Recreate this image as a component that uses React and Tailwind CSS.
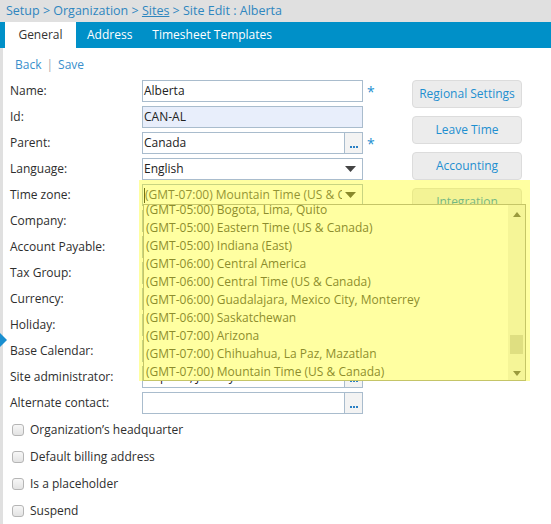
import React from 'react';

const ZONES = [
  '(GMT-05:00) Bogota, Lima, Quito',
  '(GMT-05:00) Eastern Time (US & Canada)',
  '(GMT-05:00) Indiana (East)',
  '(GMT-06:00) Central America',
  '(GMT-06:00) Central Time (US & Canada)',
  '(GMT-06:00) Guadalajara, Mexico City, Monterrey',
  '(GMT-06:00) Saskatchewan',
  '(GMT-07:00) Arizona',
  '(GMT-07:00) Chihuahua, La Paz, Mazatlan',
  '(GMT-07:00) Mountain Time (US & Canada)',
];

function Star() {
  return <span className="ml-[4px] text-[#1e8fd0] text-[14px] leading-none mt-[2px]">*</span>;
}

function TextBox({ value = '', tint = false }) {
  return (
    <div className={`w-[221px] h-[22px] border border-[#a9bccd] px-[1px] flex items-center text-[12px] text-[#222] ${tint ? 'bg-[#e8eefb]' : 'bg-white'}`}>
      {value}
    </div>
  );
}

function LookupBox({ value = '' }) {
  return (
    <div className="w-[221px] h-[22px] border border-[#a9bccd] bg-white flex text-[12px] text-[#222]">
      <div className="flex-1 px-[1px] flex items-center overflow-hidden whitespace-nowrap">{value}</div>
      <div className="w-[18px] border-l border-[#a9bccd] bg-[#f3f3f3] flex items-end justify-center pb-[5px]">
        <span className="flex gap-[1px]">
          <i className="w-[2px] h-[2px] bg-[#2a7fc4]" />
          <i className="w-[2px] h-[2px] bg-[#2a7fc4]" />
          <i className="w-[2px] h-[2px] bg-[#2a7fc4]" />
        </span>
      </div>
    </div>
  );
}

function SelectBox({ value = '', caret = false }) {
  return (
    <div className="w-[221px] h-[22px] border border-[#a9bccd] bg-white flex items-center text-[12px] text-[#222]">
      <div className="flex-1 pl-[1px] overflow-hidden whitespace-nowrap flex items-center">
        {caret && <i className="w-[1px] h-[15px] bg-[#222] shrink-0" />}
        <span className={caret ? 'text-[#555]' : ''}>{value}</span>
      </div>
      <svg width="11" height="6" viewBox="0 0 11 6" className="ml-[3px] mr-[6px] shrink-0">
        <path d="M0 0 L11 0 L5.5 6 Z" fill="#444" />
      </svg>
    </div>
  );
}

function Row({ label, children }) {
  return (
    <div className="h-[26px] flex items-center">
      <div className="w-[132px] text-[12px] text-[#2e2e2e]">{label}</div>
      {children}
    </div>
  );
}

function Check({ label }) {
  return (
    <div className="h-[27px] flex items-center">
      <span className="ml-[2px] w-[12px] h-[12px] rounded-[3px] border border-[#b5b5b5] bg-gradient-to-b from-[#f7f7f7] to-[#e3e3e3]" />
      <span className="ml-[6px] text-[12px] text-[#2e2e2e]">{label}</span>
    </div>
  );
}

function SideButton({ label }) {
  return (
    <div className="h-[28px] w-[110px] rounded-[4px] border border-[#dcdcdc] bg-[#ececec] flex items-center justify-center text-[12px] text-[#1e8fd0]">
      {label}
    </div>
  );
}

export default function App() {
  return (
    <div className="relative w-[551px] h-[524px] overflow-hidden bg-white font-['Open_Sans',sans-serif]">
      <div className="h-[22px] bg-[#e0e0e0] flex items-center pl-[6px] text-[12.5px] text-[#2f86bf] whitespace-nowrap">
        Setup &gt; Organization &gt;&nbsp;<span className="underline">Sites</span>&nbsp;&gt; Site Edit : Alberta
      </div>
      <div className="h-[26px] bg-[#0090c8] flex items-stretch text-[12px] text-white">
        <div className="ml-[5px] w-[71px] bg-white text-[#333] flex items-center justify-center">General</div>
        <div className="ml-[11px] flex items-center">Address</div>
        <div className="ml-[20px] flex items-center">Timesheet Templates</div>
      </div>

      <div className="flex h-[476px]">
        <div className="relative w-[3px] bg-[#e0e0e0]">
          <svg width="7" height="14" viewBox="0 0 7 14" className="absolute left-0 top-[285px]">
            <path d="M0 0 L7 7 L0 14 Z" fill="#1a8fd0" />
          </svg>
        </div>

        <div className="w-[409px] pl-[7px]">
          <div className="h-[30px] pt-[4px] pl-[5px] text-[12px] text-[#3a8fcc] flex items-center">
            Back <span className="mx-[5px] text-[#aaa]">|</span> Save
          </div>
          <Row label="Name:"><TextBox value="Alberta" /><Star /></Row>
          <Row label="Id:"><TextBox value="CAN-AL" tint /></Row>
          <Row label="Parent:"><LookupBox value="Canada" /><Star /></Row>
          <Row label="Language:"><SelectBox value="English" /></Row>
          <Row label="Time zone:"><SelectBox value="(GMT-07:00) Mountain Time (US & Canada)" caret /></Row>
          <Row label="Company:"><SelectBox /></Row>
          <Row label="Account Payable:"><LookupBox /></Row>
          <Row label="Tax Group:"><SelectBox /></Row>
          <Row label="Currency:"><SelectBox /></Row>
          <Row label="Holiday:"><LookupBox /></Row>
          <Row label="Base Calendar:"><LookupBox /></Row>
          <Row label="Site administrator:"><LookupBox value="Hopkins, Jeremy" /></Row>
          <Row label="Alternate contact:"><LookupBox /></Row>
          <Check label="Organization’s headquarter" />
          <Check label="Default billing address" />
          <Check label="Is a placeholder" />
          <Check label="Suspend" />
        </div>

        <div className="pt-[32px] flex flex-col gap-[8px]">
          <SideButton label="Regional Settings" />
          <SideButton label="Leave Time" />
          <SideButton label="Accounting" />
          <SideButton label="Integration" />
        </div>
      </div>

      {/* open time zone list */}
      <div className="absolute left-[143px] top-[204px] w-[383px] h-[177px] border border-[#a4a4a4] bg-white overflow-hidden flex">
        <div className="flex-1 -mt-[4px] text-[12px] text-[#4a4a4a]">
          {ZONES.map((z) => (
            <div key={z} className="h-[18px] leading-[18px] pl-[2px] whitespace-nowrap">{z}</div>
          ))}
        </div>
        <div className="w-[17px] bg-[#f0f0f0] relative">
          <svg width="8" height="5" viewBox="0 0 8 5" className="absolute left-[5px] top-[7px]">
            <path d="M0 5 L4 0 L8 5 Z" fill="#606060" />
          </svg>
          <div className="absolute left-[2px] top-[130px] w-[13px] h-[19px] bg-[#cdcdcd]" />
          <svg width="8" height="5" viewBox="0 0 8 5" className="absolute left-[5px] top-[166px]">
            <path d="M0 0 L8 0 L4 5 Z" fill="#606060" />
          </svg>
        </div>
      </div>

      {/* highlight */}
      <div className="absolute left-[139px] top-[180px] w-[391px] h-[201px] bg-[rgba(255,255,0,0.37)] pointer-events-none" />
    </div>
  );
}
